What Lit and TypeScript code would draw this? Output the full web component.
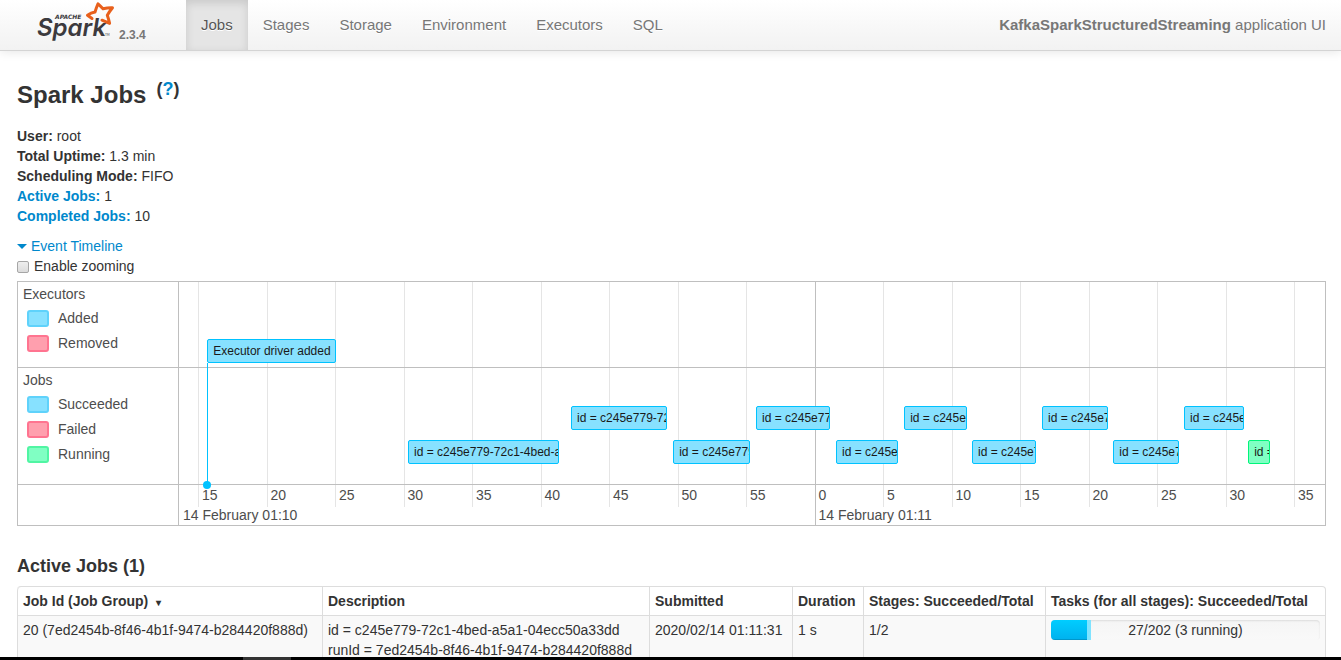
import { LitElement, html, css } from "lit";
import { customElement, state } from "lit/decorators.js";
import { classMap } from "lit/directives/class-map.js";
import { styleMap } from "lit/directives/style-map.js";

/* The visible window of the timeline, in seconds after 01:10:00. */
const WINDOW_START = 13.61;
const WINDOW_LENGTH = 83.65;

const at = (second: number) => `${((second - WINDOW_START) / WINDOW_LENGTH) * 100}%`;
const span = (from: number, to: number) => `${((to - from) / WINDOW_LENGTH) * 100}%`;

const RUN_LABEL = "id = c245e779-72c1-4bed-a5a1-04ecc50a33dd";

interface JobSpan {
  from: number;
  to: number;
  upper?: boolean;
  running?: boolean;
}

const JOBS: JobSpan[] = [
  { from: 30.33, to: 41.35 },
  { from: 42.23, to: 49.24, upper: true },
  { from: 49.68, to: 55.3 },
  { from: 55.73, to: 61.13, upper: true },
  { from: 61.57, to: 66.1 },
  { from: 66.54, to: 71.13, upper: true },
  { from: 71.5, to: 76.17 },
  { from: 76.61, to: 81.43, upper: true },
  { from: 81.81, to: 86.61 },
  { from: 86.97, to: 91.35, upper: true },
  { from: 91.65, to: 93.25, running: true },
];

const EXECUTOR = { from: 15.67, to: 25.08 };
const TICKS = Array.from({ length: 17 }, (_, i) => 15 + i * 5);

@customElement("spark-logo")
class SparkLogo extends LitElement {
  static styles = css`
    :host {
      display: block;
    }
    svg {
      display: block;
    }
    .word {
      font: italic 600 24px Inter, sans-serif;
      fill: #3c3a3e;
    }
    .small {
      font: italic 700 6px "DejaVu Sans", sans-serif;
      fill: #3c3a3e;
    }
    .tm {
      font: 3px Lato, sans-serif;
      fill: #3c3a3e;
    }
    .star {
      fill: none;
      stroke: #e8601c;
      stroke-width: 3;
      stroke-linejoin: round;
      stroke-linecap: round;
    }
  `;

  render() {
    return html`
      <svg width="78" height="44" viewBox="0 0 78 44" role="img" aria-label="Apache Spark">
        <text class="word" x="0" y="36">Spark</text>
        <text class="small" x="18" y="19">APACHE</text>
        <text class="tm" x="68" y="36">TM</text>
        <path
          class="star"
          d="M55 18.5 L50.5 15.2 Q54 12.8 58 12 Q59.5 7 61 3.8 Q63.5 6 66 8.8 Q71 7.6 75.5 7.8 Q72.5 11.5 70.3 15.2 Q71.8 19.5 72.6 23.4 L65 20.2"
        />
      </svg>
    `;
  }
}

@customElement("event-timeline")
class EventTimeline extends LitElement {
  static styles = css`
    :host {
      display: block;
      color: #4d4d4d;
    }
    .timeline {
      display: grid;
      grid-template-columns: 161px minmax(0, 1fr);
      position: relative;
      border: 1px solid #bfbfbf;
    }
    .labels {
      box-sizing: border-box;
      border-right: 1px solid #bfbfbf;
      border-bottom: 1px solid #bfbfbf;
      padding: 2px 5px 11px;
    }
    .labels.jobs {
      padding-bottom: 17px;
    }
    .labels.last,
    .axis {
      border-bottom: 0;
    }
    .title {
      line-height: 20px;
    }
    .legend {
      list-style: none;
      margin: 2px 0 0;
      padding: 0;
    }
    .legend li {
      display: flex;
      box-sizing: border-box;
      height: 25px;
      padding: 2px 0 0 4px;
      gap: 9px;
    }
    .swatch {
      box-sizing: border-box;
      width: 22px;
      height: 17px;
      margin-top: 2px;
      border: 2px solid #5fd2fb;
      border-radius: 3px;
      background: #87e1ff;
    }
    .swatch.failed {
      border-color: #ff7490;
      background: #ff9fae;
    }
    .swatch.running {
      border-color: #50f5a3;
      background: #80ffc3;
    }
    .track {
      position: relative;
      border-bottom: 1px solid #bfbfbf;
      overflow: hidden;
    }
    .layer {
      position: absolute;
      inset: 0 0 0 161px;
      overflow: hidden;
      pointer-events: none;
    }
    .line {
      position: absolute;
      top: 0;
      bottom: 18px;
      border-left: 1px solid #e5e5e5;
    }
    .line.major {
      bottom: 0;
      border-color: #bfbfbf;
    }
    .item {
      position: absolute;
      bottom: 20px;
      box-sizing: border-box;
      height: 24px;
      padding-left: 5px;
      border: 1px solid #00c2ff;
      border-radius: 2px;
      background: #87e1ff;
      color: #1a1a1a;
      font-size: 12px;
      line-height: 22px;
      white-space: nowrap;
      overflow: hidden;
    }
    .item.upper {
      bottom: 54px;
    }
    .item.executor {
      bottom: 4px;
    }
    .item.running {
      border-color: #00f57a;
      background: #80ffc3;
    }
    .stem {
      position: absolute;
      top: 81px;
      bottom: 40px;
      border-left: 1px solid #00c2ff;
    }
    .stem::after {
      content: "";
      position: absolute;
      left: -5px;
      bottom: -4px;
      width: 8px;
      height: 8px;
      border-radius: 50%;
      background: #00c2ff;
    }
    .axis {
      position: relative;
      height: 40px;
      line-height: 20px;
    }
    .tick,
    .date {
      position: absolute;
      top: 0;
      padding-left: 4px;
      white-space: nowrap;
    }
    .date {
      top: 20px;
    }
  `;

  private legend(entries: [string, string][]) {
    return html`<ul class="legend">
      ${entries.map(
        ([name, kind]) => html`<li>
          <span class=${classMap({ swatch: true, [kind]: true })}></span>${name}
        </li>`
      )}
    </ul>`;
  }

  render() {
    return html`
      <div class="timeline">
        <div class="layer">
          ${TICKS.map(
            (t) => html`<div
              class=${classMap({ line: true, major: t === 60 })}
              style=${styleMap({ left: at(t) })}
            ></div>`
          )}
        </div>
        <div class="labels">
          <div class="title">Executors</div>
          ${this.legend([["Added", "added"], ["Removed", "failed"]])}
        </div>
        <div class="track">
          <div
            class="item executor"
            style=${styleMap({
              left: at(EXECUTOR.from),
              width: span(EXECUTOR.from, EXECUTOR.to),
            })}
          >Executor driver added</div>
        </div>
        <div class="labels jobs">
          <div class="title">Jobs</div>
          ${this.legend([
            ["Succeeded", "succeeded"],
            ["Failed", "failed"],
            ["Running", "running"],
          ])}
        </div>
        <div class="track">
          ${JOBS.map(
            (job) => html`<div
              class=${classMap({ item: true, upper: !!job.upper, running: !!job.running })}
              style=${styleMap({ left: at(job.from), width: span(job.from, job.to) })}
            >${RUN_LABEL}</div>`
          )}
        </div>
        <div class="labels last"></div>
        <div class="axis">
          ${TICKS.map(
            (t) => html`<span class="tick" style=${styleMap({ left: at(t) })}>${t % 60}</span>`
          )}
          <span class="date">14 February 01:10</span>
          <span class="date" style=${styleMap({ left: at(60) })}>14 February 01:11</span>
        </div>
        <div class="layer">
          <div class="stem" style=${styleMap({ left: at(EXECUTOR.from) })}></div>
        </div>
      </div>
    `;
  }
}

@customElement("app-root")
class AppRoot extends LitElement {
  static styles = css`
    :host {
      display: flex;
      flex-direction: column;
      height: 100vh;
      overflow: hidden;
      background: #fff;
      color: #333;
      font: 14px/20px "Liberation Sans", Arial, sans-serif;
    }
    a {
      color: #08c;
      text-decoration: none;
    }
    .navbar {
      display: flex;
      align-items: stretch;
      flex: none;
      height: 50px;
      padding: 0 15px 0 37px;
      border-bottom: 1px solid #d4d4d4;
      background: linear-gradient(#fff, #f2f2f2);
      box-shadow: 0 1px 10px rgba(0, 0, 0, 0.1);
      color: #777;
      font-size: 15px;
      line-height: 50px;
    }
    .brand {
      display: flex;
      gap: 4px;
      width: 149px;
    }
    .version {
      padding-top: 10px;
      color: #777;
      font-size: 12px;
      font-weight: bold;
      line-height: 50px;
    }
    .tabs {
      display: flex;
      flex: 1;
      margin: 0;
      padding: 0;
      list-style: none;
    }
    .tabs a {
      display: block;
      padding: 0 15px;
      color: #777;
      text-shadow: 0 1px 0 #fff;
    }
    .tabs .active {
      background: #e5e5e5;
      box-shadow: inset 0 3px 8px rgba(0, 0, 0, 0.125);
      color: #555;
    }
    .app-name {
      margin: 0;
      white-space: nowrap;
    }
    .content {
      flex: 1;
      min-height: 0;
      overflow: hidden;
      padding: 24px 15px 0 17px;
    }
    h1 {
      display: flex;
      gap: 10px;
      margin: 0 0 11px;
      font-size: 24px;
      line-height: 40px;
    }
    .help {
      font-size: 18px;
      line-height: 28px;
    }
    .summary {
      margin: 0 0 10px;
      padding: 0;
      list-style: none;
    }
    .toggle {
      display: flex;
      align-items: center;
      gap: 4px;
      padding: 0;
      border: 0;
      background: none;
      color: #08c;
      font: inherit;
    }
    .arrow {
      border: 5px solid transparent;
      border-top-color: #08c;
      border-bottom: 0;
    }
    .zooming {
      display: flex;
      align-items: center;
      gap: 5px;
      margin-bottom: 5px;
    }
    .zooming input {
      appearance: none;
      box-sizing: border-box;
      width: 12px;
      height: 12px;
      margin: 2px 0 0;
      border: 1px solid #a6a6a6;
      border-radius: 2px;
      background: linear-gradient(#eee, #dcdcdc);
    }
    .zooming input:checked {
      background: #08c;
    }
    h2 {
      margin: 30px 0 10px;
      font-size: 18px;
      line-height: 20px;
    }
    table {
      width: 100%;
      table-layout: fixed;
      border: 1px solid #ddd;
      border-left: 0;
      border-radius: 4px;
      border-collapse: separate;
      border-spacing: 0;
    }
    .c-id {
      width: 305px;
    }
    .c-submitted {
      width: 143px;
    }
    .c-duration {
      width: 71px;
    }
    .c-stages {
      width: 182px;
    }
    .c-tasks {
      width: 280px;
    }
    th,
    td {
      padding: 4px 5px;
      border-left: 1px solid #ddd;
      text-align: left;
      vertical-align: top;
      white-space: nowrap;
    }
    th:first-child {
      border-top-left-radius: 4px;
    }
    td {
      border-top: 1px solid #ddd;
      background: #f9f9f9;
    }
    .sort {
      padding-left: 4px;
      font-size: 10px;
      line-height: 10px;
    }
    .progress {
      display: grid;
      height: 20px;
      border-radius: 4px;
      background: linear-gradient(#f5f5f5, #f9f9f9);
      box-shadow: inset 0 1px 2px rgba(0, 0, 0, 0.1);
      overflow: hidden;
    }
    .fill,
    .count {
      grid-area: 1 / 1;
    }
    .fill {
      display: flex;
    }
    .done {
      background: linear-gradient(#00cdff, #00b1ee);
      box-shadow: inset 0 -1px 0 rgba(0, 0, 0, 0.15);
    }
    .started {
      background: #80e3ff;
    }
    .count {
      text-align: center;
    }
    .taskbar {
      flex: none;
      height: 3px;
      padding-left: 243px;
      background: #000;
    }
    .taskbar div {
      width: 48px;
      height: 3px;
      background: #333;
    }
  `;

  @state() private open = true;

  render() {
    const tabs = ["Jobs", "Stages", "Storage", "Environment", "Executors", "SQL"];
    const tasks = { done: 27, running: 3, total: 202 };
    const share = (n: number) => `${(n / tasks.total) * 100}%`;

    return html`
      <header class="navbar">
        <a class="brand" href="#">
          <spark-logo></spark-logo>
          <span class="version">2.3.4</span>
        </a>
        <ul class="tabs">
          ${tabs.map(
            (tab, i) => html`<li><a class=${classMap({ active: i === 0 })} href="#">${tab}</a></li>`
          )}
        </ul>
        <p class="app-name"><strong>KafkaSparkStructuredStreaming</strong> application UI</p>
      </header>
      <main class="content">
        <h1>Spark Jobs <span class="help">(<a href="#">?</a>)</span></h1>
        <ul class="summary">
          <li><strong>User:</strong> root</li>
          <li><strong>Total Uptime:</strong> 1.3 min</li>
          <li><strong>Scheduling Mode:</strong> FIFO</li>
          <li><a href="#active"><strong>Active Jobs:</strong></a> 1</li>
          <li><a href="#completed"><strong>Completed Jobs:</strong></a> 10</li>
        </ul>
        <button class="toggle" @click=${() => (this.open = !this.open)}>
          <span class="arrow"></span>Event Timeline
        </button>
        ${this.open
          ? html`<div class="zooming">
                <input type="checkbox" id="zoom" /><label for="zoom">Enable zooming</label>
              </div>
              <event-timeline></event-timeline>`
          : null}
        <h2 id="active">Active Jobs (1)</h2>
        <table>
          <colgroup>
            <col class="c-id" />
            <col />
            <col class="c-submitted" />
            <col class="c-duration" />
            <col class="c-stages" />
            <col class="c-tasks" />
          </colgroup>
          <thead>
            <tr>
              <th>Job Id (Job Group) <span class="sort">▾</span></th>
              <th>Description</th>
              <th>Submitted</th>
              <th>Duration</th>
              <th>Stages: Succeeded/Total</th>
              <th>Tasks (for all stages): Succeeded/Total</th>
            </tr>
          </thead>
          <tbody>
            <tr>
              <td>20 (7ed2454b-8f46-4b1f-9474-b284420f888d)</td>
              <td>
                id = c245e779-72c1-4bed-a5a1-04ecc50a33dd<br />runId =
                7ed2454b-8f46-4b1f-9474-b284420f888d
              </td>
              <td>2020/02/14 01:11:31</td>
              <td>1 s</td>
              <td>1/2</td>
              <td>
                <div class="progress">
                  <div class="fill">
                    <div class="done" style=${styleMap({ width: share(tasks.done) })}></div>
                    <div class="started" style=${styleMap({ width: share(tasks.running) })}></div>
                  </div>
                  <span class="count">27/202 (3 running)</span>
                </div>
              </td>
            </tr>
          </tbody>
        </table>
      </main>
      <footer class="taskbar"><div></div></footer>
    `;
  }
}
